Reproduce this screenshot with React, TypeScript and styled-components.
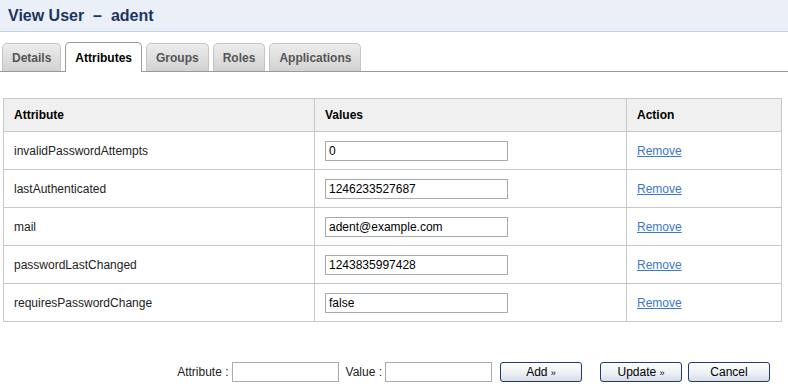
import * as React from "react";
import styled, { createGlobalStyle } from "styled-components";

const GlobalStyle = createGlobalStyle`
	html, body {
		margin: 0;
		padding: 0;
		background: #fff;
		font-family: "Liberation Sans", Arial, sans-serif;
		font-size: 12px;
		color: #222;
	}
`;

const attributes = [
	{ name: "invalidPasswordAttempts", value: "0" },
	{ name: "lastAuthenticated", value: "1246233527687" },
	{ name: "mail", value: "adent@example.com" },
	{ name: "passwordLastChanged", value: "1243835997428" },
	{ name: "requiresPasswordChange", value: "false" },
];

const tabs = ["Details", "Attributes", "Groups", "Roles", "Applications"];

export default function App() {
	return (
		<Page>
			<GlobalStyle />
			<Header>
				<Title>View User &nbsp;–&nbsp; adent</Title>
			</Header>
			<TabBar>
				{tabs.map(t => (
					<Tab key={t} active={t === "Attributes"}>{t}</Tab>
				))}
			</TabBar>
			<Table>
				<thead>
					<tr>
						<Th style={{ width: 300 }}>Attribute</Th>
						<Th style={{ width: 301 }}>Values</Th>
						<Th>Action</Th>
					</tr>
				</thead>
				<tbody>
					{attributes.map(a => (
						<tr key={a.name}>
							<Td>{a.name}</Td>
							<Td><ValueInput defaultValue={a.value} /></Td>
							<Td><RemoveLink href="#">Remove</RemoveLink></Td>
						</tr>
					))}
				</tbody>
			</Table>
			<FormRow>
				<Label>Attribute :</Label>
				<SmallInput />
				<Label>Value :</Label>
				<SmallInput />
				<Button>Add <Raquo>»</Raquo></Button>
				<Button gapBefore={18}>Update <Raquo>»</Raquo></Button>
				<Button gapBefore={6}>Cancel</Button>
			</FormRow>
		</Page>
	);
}

const Page = styled.div`
	width: 788px;
	display: flex;
	flex-direction: column;
`;

const Header = styled.div`
	height: 31px;
	background: #eaeff8;
	border-bottom: 1px solid #c5d4e8;
	display: flex;
	align-items: center;
	padding-left: 8px;
`;

const Title = styled.h1`
	margin: 0;
	font-size: 16px;
	font-weight: bold;
	color: #1b365e;
`;

const TabBar = styled.div`
	display: flex;
	align-items: flex-end;
	gap: 4px;
	margin-top: 9px;
	padding-left: 2px;
	height: 30px;
	border-bottom: 1px solid #9a9a9a;
`;

const Tab = styled.div<{ active?: boolean }>`
	height: ${p => (p.active ? "30px" : "28px")};
	box-sizing: border-box;
	padding: 0 9px;
	display: flex;
	align-items: center;
	font-weight: bold;
	font-size: 12px;
	color: ${p => (p.active ? "#000" : "#555")};
	border: 1px solid ${p => (p.active ? "#999" : "#c4c4c4")};
	border-bottom: none;
	border-radius: 5px 5px 0 0;
	background: ${p => (p.active ? "#fff" : "linear-gradient(#ececec, #d2d2d2)")};
	margin-bottom: ${p => (p.active ? "-1px" : "0")};
	padding-top: ${p => (p.active ? "0" : "1px")};
`;

const Table = styled.table`
	margin: 26px 0 0 3px;
	width: 779px;
	border-collapse: collapse;
	border: 1px solid #c8c8c8;
`;

const Th = styled.th`
	height: 32px;
	padding: 0 0 0 10px;
	text-align: left;
	font-weight: bold;
	color: #000;
	background: #f0f0f0;
	border: 1px solid #c8c8c8;
`;

const Td = styled.td`
	height: 37px;
	padding: 0 0 0 10px;
	border: 1px solid #c8c8c8;
	color: #222;
`;

const ValueInput = styled.input`
	width: 183px;
	height: 20px;
	box-sizing: border-box;
	border: 1px solid #a5acb2;
	padding: 0 3px;
	font-family: inherit;
	font-size: 12px;
	color: #000;
	outline: none;
`;

const RemoveLink = styled.a`
	color: #3b78d0;
	text-decoration: underline;
`;

const FormRow = styled.div`
	display: flex;
	align-items: center;
	justify-content: flex-end;
	margin-top: 40px;
	padding-right: 18px;
`;

const Label = styled.span`
	color: #222;
	margin-right: 3px;
`;

const SmallInput = styled.input`
	width: 107px;
	height: 20px;
	box-sizing: border-box;
	border: 1px solid #a5acb2;
	outline: none;
	margin: 0 7px 0 0;
	&:last-of-type {
		margin-right: 8px;
	}
`;

const Button = styled.button<{ gapBefore?: number }>`
	width: 82px;
	height: 20px;
	box-sizing: border-box;
	border: 1px solid #1c3d73;
	border-radius: 3px;
	background: linear-gradient(#ffffff, #eceef3 60%, #d7dbe5);
	font-family: inherit;
	font-size: 12px;
	color: #000;
	padding: 0;
	margin-left: ${p => p.gapBefore ?? 0}px;
`;

const Raquo = styled.span`
	font-size: 9px;
`;
